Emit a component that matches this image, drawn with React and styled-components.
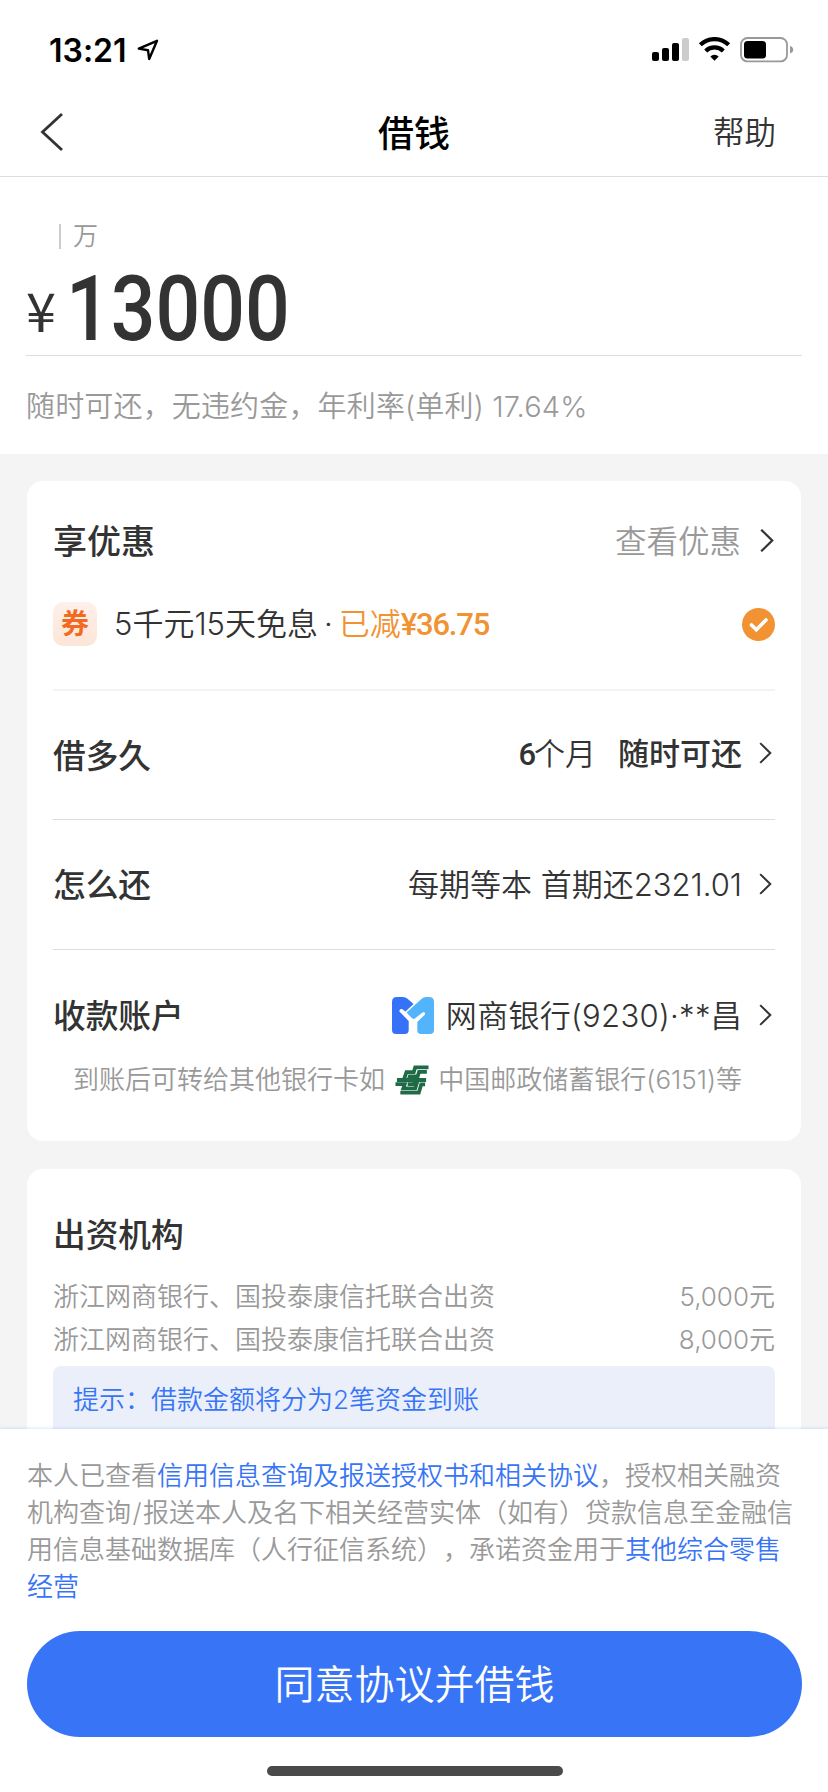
import styled, { createGlobalStyle } from 'styled-components';

const lenders = [
  { id: 1, name: '浙江网商银行、国投泰康信托联合出资', amount: '5,000元' },
  { id: 2, name: '浙江网商银行、国投泰康信托联合出资', amount: '8,000元' },
];

function Chevron({ large }) {
  return (
    <ChevronIcon $large={large} viewBox="0 0 14 24">
      <path d="M1.2 1.2L12.2 12L1.2 22.8" fill="none" stroke="#333" strokeWidth={large ? 2.3 : 2.2} />
    </ChevronIcon>
  );
}

function StatusIcons() {
  return (
    <svg width="142" height="26" viewBox="0 0 142 26">
      <rect x="0" y="15" width="7" height="9" rx="2" />
      <rect x="10" y="11" width="7" height="13" rx="2" />
      <rect x="20" y="6" width="7" height="18" rx="2" />
      <rect x="30" y="1" width="7" height="23" rx="2" fill="#ccc" />
      <g fill="none" stroke="#000" strokeWidth="4.2">
        <path d="M48.3 7.8A20.5 20.5 0 0 1 76.7 7.8" />
        <path d="M53.7 13.9A12.6 12.6 0 0 1 71.3 13.9" />
      </g>
      <path d="M58.3 19.4A6 6 0 0 1 66.7 19.4L62.5 23.8Z" />
      <rect x="89" y="1" width="46" height="23.4" rx="6.5" fill="none" stroke="#999" strokeWidth="1.8" />
      <rect x="92" y="4" width="22" height="17.4" rx="3.5" />
      <path d="M138 9C140.2 9.6 141.2 11 141.2 12.7S140.2 15.8 138 16.4Z" fill="#999" />
    </svg>
  );
}

function MyBankLogo() {
  return (
    <svg width="42" height="37" viewBox="0 0 42 37">
      <path d="M5 0H11Q13.5 0 15.5 1.8L21.5 7L13.5 14.5L10 12Q7.2 11.5 7.4 14.5L16.7 24V33Q16.7 37 12.7 37H4Q0 37 0 33V5Q0 0 5 0Z" fill="#3672f7" />
      <path d="M30 1.5Q31.5 0 34 0H37Q42 0 42 5V33Q42 37 38 37H29Q25.3 37 25.3 33V25L33 17.5Q33.5 14.8 30.5 15.5L22.5 21.8Q21 22.3 19.5 20.8L14.5 15.6Z" fill="#52b4fa" />
    </svg>
  );
}

function PostBankLogo() {
  return (
    <svg width="34" height="30" viewBox="0 0 35 30">
      <g fill="none" stroke="#1f6b48" strokeWidth="3.9">
        <path d="M34.5 2H20.8L19.3 6.8H11.8L9 15" />
        <path d="M32.8 6.6H24.8L23.2 11.4H15.2L14 15" />
        <path d="M2 15H21L19.5 19.3H13" />
        <path d="M0.5 19.3H10L8.6 23.7H20.8L23.5 15H32" />
        <path d="M5.5 28.1H24.5L27 19.5H31" />
      </g>
    </svg>
  );
}

export default function App() {
  return (
    <>
      <GlobalStyle />
      <Page>
        <StatusBar>
          <Time>
            13:21
            <svg width="22" height="22" viewBox="0 0 22 22">
              <path d="M1.8 9.6L20 1.8L12.2 20L11 11.2Z" fill="none" stroke="#000" strokeWidth="2.4" strokeLinejoin="round" />
            </svg>
          </Time>
          <StatusIcons />
        </StatusBar>

        <NavBar>
          <svg width="24" height="40" viewBox="0 0 24 40">
            <path d="M22 2L2.5 20L22 38" fill="none" stroke="#333" strokeWidth="2.8" />
          </svg>
          <NavTitle>借钱</NavTitle>
          <NavAction>帮助</NavAction>
        </NavBar>

        <AmountPanel>
          <UnitHint>万</UnitHint>
          <AmountInput>
            <Currency>¥</Currency>
            <Amount>13000</Amount>
          </AmountInput>
          <RateNote>随时可还，无违约金，年利率(单利) 17.64%</RateNote>
        </AmountPanel>

        <Content>
          <Card>
            <Discount>
              <Row $height={120}>
                <Label $size={34}>享优惠</Label>
                <Value $muted>查看优惠<Chevron large /></Value>
              </Row>
              <Coupon>
                <CouponBadge>券</CouponBadge>
                <CouponText>
                  5千元15天免息<Dot>·</Dot><Saved>已减<b>¥36.75</b></Saved>
                </CouponText>
                <svg width="33" height="33" viewBox="0 0 33 33">
                  <circle cx="16.5" cy="16.5" r="16.5" fill="#f19333" />
                  <path d="M9.5 17L14.3 21.7L24 12" fill="none" stroke="#fff" strokeWidth="3.6" strokeLinecap="round" />
                </svg>
              </Coupon>
            </Discount>
            <Row $height={129} $line>
              <Label>借多久</Label>
              <Value $lift={4}>
                <Term><b>6</b>个月</Term>
                <strong>随时可还</strong>
                <Chevron />
              </Value>
            </Row>
            <Row $height={130} $line>
              <Label>怎么还</Label>
              <Value>每期等本 首期还2321.01<Chevron /></Value>
            </Row>
            <Row $height={115} $top={15}>
              <Label>收款账户</Label>
              <Value>
                <BankMark><MyBankLogo /></BankMark>
                <Account>网商银行(9230)·**昌</Account>
                <Chevron />
              </Value>
            </Row>
            <TransferNote>
              <span>到账后可转给其他银行卡如</span>
              <PostBankLogo />
              <span>中国邮政储蓄银行(6151)等</span>
            </TransferNote>
          </Card>

          <Card>
            <Row $height={104} $top={26}>
              <Label>出资机构</Label>
            </Row>
            {lenders.map(l => (
              <Lender key={l.id}>
                <span>{l.name}</span>
                <span>{l.amount}</span>
              </Lender>
            ))}
            <Tip>提示：借款金额将分为2笔资金到账</Tip>
          </Card>
        </Content>

        <Footer>
          <Agreement>
            <div>本人已查看<a>信用信息查询及报送授权书和相关协议</a>，授权相关融资</div>
            <div>机构查询<Slash>/</Slash>报送本人及名下相关经营实体（如有）贷款信息至金融信</div>
            <div>用信息基础数据库（人行征信系统），承诺资金用于<a>其他综合零售</a></div>
            <div><a>经营</a></div>
          </Agreement>
          <SubmitButton>同意协议并借钱</SubmitButton>
          <HomeIndicator />
        </Footer>
      </Page>
    </>
  );
}

const GlobalStyle = createGlobalStyle`
  * {
    box-sizing: border-box;
  }
  body {
    margin: 0;
    background: #fff;
    color: #333;
    font-family: Inter, 'Noto Sans CJK SC', sans-serif;
    font-weight: 350;
    font-feature-settings: 'calt' 0;
    text-spacing-trim: space-all;
  }
  svg {
    flex-shrink: 0;
  }
`;

const Page = styled.div`
  display: flex;
  flex-direction: column;
  width: 828px;
  height: 1792px;
  overflow: hidden;
`;

const StatusBar = styled.div`
  display: flex;
  justify-content: space-between;
  align-items: center;
  height: 88px;
  padding: 12px 34px 0 49px;
`;
const Time = styled.div`
  display: flex;
  align-items: center;
  gap: 10px;
  color: #000;
  font-size: 32px;
  font-weight: 600;
`;

const NavBar = styled.div`
  display: grid;
  grid-template-columns: 1fr auto 1fr;
  align-items: center;
  height: 89px;
  padding: 0 52px 0 40px;
  border-bottom: 1px solid #ddd;
`;
const NavTitle = styled.h1`
  margin: 0 0 0 12px;
  padding-bottom: 3px;
  color: #000;
  font-size: 36px;
  font-weight: 500;
`;
const NavAction = styled.div`
  justify-self: end;
  padding-bottom: 4px;
  font-size: 31.5px;
`;

const AmountPanel = styled.div`
  height: 277px;
  padding: 42px 26px 0;
`;
const UnitHint = styled.div`
  display: flex;
  align-items: center;
  gap: 12px;
  height: 34px;
  padding-left: 33px;
  color: #999;
  font-size: 25px;
  line-height: 30px;
  &::before {
    content: '';
    width: 2px;
    height: 25px;
    background: #ccc;
  }
`;
const AmountInput = styled.div`
  display: flex;
  align-items: baseline;
  height: 103px;
  padding-top: 5px;
  line-height: 103px;
  border-bottom: 1px solid #ddd;
`;
const Currency = styled.span`
  width: 40px;
  font-family: 'Noto Sans CJK SC', sans-serif;
  font-size: 54px;
  font-weight: 400;
  transform: translateY(-8px);
`;
const Amount = styled.span`
  font-family: Roboto, sans-serif;
  font-size: 90px;
  font-weight: 500;
  transform: scaleX(0.875);
  transform-origin: left;
`;
const RateNote = styled.div`
  margin-top: 30px;
  color: #999;
  font-size: 29px;
  line-height: 42px;
  letter-spacing: 0.16px;
  white-space: nowrap;
`;

const Content = styled.div`
  display: flex;
  flex-direction: column;
  gap: 28px;
  height: 975px;
  padding: 27px 27px 0;
  background: #f4f4f4;
  overflow: hidden;
`;
const Card = styled.div`
  flex-shrink: 0;
  padding: 0 26px;
  border-radius: 16px;
  background: #fff;
  &:first-child {
    height: 660px;
  }
  &:last-child {
    height: 320px;
  }
`;
const Row = styled.div`
  display: flex;
  justify-content: space-between;
  align-items: center;
  height: ${p => p.$height}px;
  padding-top: ${p => p.$top || 0}px;
  border-bottom: ${p => (p.$line ? '1px solid #ddd' : 'none')};
`;
const Label = styled.div`
  padding-bottom: 4px;
  font-size: ${p => p.$size || 32.7}px;
  font-weight: 500;
`;
const Value = styled.div`
  display: flex;
  align-items: center;
  color: ${p => (p.$muted ? '#999' : '#333')};
  font-size: ${p => (p.$muted ? 31.5 : 31)}px;
  white-space: nowrap;
  padding-bottom: ${p => (p.$lift || 2) * 2}px;
  strong {
    font-weight: 500;
  }
`;
const ChevronIcon = styled.svg`
  width: ${p => (p.$large ? 14 : 13)}px;
  height: ${p => (p.$large ? 25 : 22)}px;
  margin-top: 3px;
  margin-left: ${p => (p.$large ? 19 : 17)}px;
  margin-right: ${p => (p.$large ? 1 : 3)}px;
`;

const Discount = styled.div`
  height: 210px;
  border-bottom: 2px solid #f3f3f3;
`;
const Coupon = styled.div`
  display: flex;
  align-items: center;
  height: 46px;
`;
const CouponBadge = styled.div`
  width: 44px;
  height: 44px;
  border-radius: 10px;
  background: linear-gradient(#fdf0ea, #fde5d8);
  color: #f26a21;
  font-size: 28px;
  font-weight: 700;
  line-height: 45px;
  text-align: center;
`;
const CouponText = styled.div`
  display: flex;
  flex: 1;
  padding-left: 17px;
  font-size: 31px;
  line-height: 46px;
`;
const Dot = styled.span`
  margin: 0 6px;
`;
const Saved = styled.span`
  color: #f19333;
  b {
    font-family: Roboto, sans-serif;
    font-weight: 500;
    letter-spacing: -1.2px;
  }
`;
const Term = styled.span`
  margin-right: 22px;
  b {
    font-family: Roboto, sans-serif;
    font-weight: 500;
    letter-spacing: -2px;
  }
`;
const BankMark = styled.span`
  display: flex;
  padding-top: 5px;
`;
const Account = styled.span`
  margin-left: 12px;
  letter-spacing: 0.3px;
`;
const TransferNote = styled.div`
  display: flex;
  align-items: center;
  justify-content: space-between;
  width: 669px;
  margin-left: 20px;
  color: #999;
  font-size: 26px;
  line-height: 1;
  white-space: nowrap;
  span {
    padding-bottom: 1px;
  }
`;

const Lender = styled.div`
  display: flex;
  justify-content: space-between;
  align-items: center;
  height: 43px;
  color: #999;
  font-size: 26px;
`;
const Tip = styled.div`
  height: 84px;
  margin-top: 7px;
  padding-left: 20px;
  border-radius: 8px;
  background: #eaeffa;
  color: #3875f6;
  font-size: 26px;
  line-height: 67px;
`;

const Slash = styled.span`
  padding: 0 1.5px;
`;
const Footer = styled.div`
  flex: 1;
  padding: 28px 26px 0 27px;
  background: #fff;
  box-shadow: 0 -1px 3px rgba(56, 117, 246, 0.18);
  z-index: 1;
`;
const Agreement = styled.div`
  height: 174px;
  color: #999;
  font-size: 26px;
  line-height: 37px;
  white-space: nowrap;
  a {
    color: #3875f6;
  }
`;
const SubmitButton = styled.button`
  display: block;
  width: 100%;
  height: 106px;
  padding: 0 0 4px;
  border: none;
  border-radius: 53px;
  background: #3875f6;
  color: #fff;
  font-family: inherit;
  font-size: 40px;
  font-weight: 350;
`;
const HomeIndicator = styled.div`
  width: 296px;
  height: 10px;
  margin: 29px auto 0;
  border-radius: 5px;
  background: #4a4a4a;
`;
